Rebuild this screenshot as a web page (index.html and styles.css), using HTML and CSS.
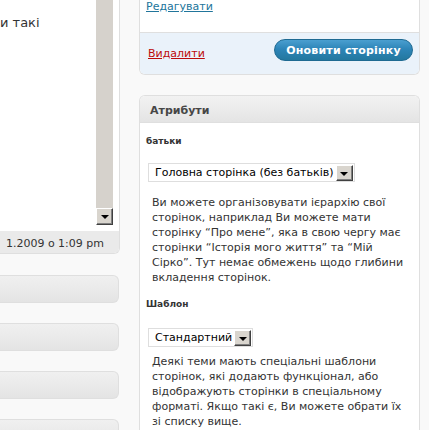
FILE: index.html
```html
<!DOCTYPE html>
<html lang="uk">
<head>
<meta charset="utf-8">
<title>Редагувати сторінку</title>
<link rel="stylesheet" href="styles.css">
</head>
<body>
<div class="page">
  <div class="main-col">
    <div class="editor">
      <div class="ta">
        <div class="ta-text">и такі</div>
        <div class="scrollbar"><span class="sb-btn"><span class="tri"></span></span></div>
      </div>
      <div class="status"><span class="status-text">1.2009 о 1:09 pm</span></div>
    </div>
    <div class="collapsed"></div>
    <div class="collapsed"></div>
    <div class="collapsed"></div>
    <div class="collapsed"></div>
  </div>
  <div class="side-col">
    <div class="submitbox">
      <div class="misc"><a class="edit-link" href="#">Редагувати</a></div>
      <div class="major">
        <a class="delete" href="#">Видалити</a>
        <span class="button">Оновити сторінку</span>
      </div>
    </div>
    <div class="postbox">
      <h3 class="pb-title">Атрибути</h3>
      <div class="inside">
        <h5 class="label label-parent">батьки</h5>
        <div class="select select-parent"><span class="sel-text">Головна сторінка (без батьків)</span><span class="sel-btn"><span class="tri"></span></span></div>
        <p class="help help-parent">Ви можете організовувати ієрархію свої<br>сторінок, наприклад Ви можете мати<br>сторінку “Про мене”, яка в свою чергу має<br>сторінки “Історія мого життя” та “Мій<br>Сірко”. Тут немає обмежень щодо глибини<br>вкладення сторінок.</p>
        <h5 class="label label-template">Шаблон</h5>
        <div class="select select-template"><span class="sel-text">Стандартний</span><span class="sel-btn"><span class="tri"></span></span></div>
        <p class="help help-template">Деякі теми мають спеціальні шаблони<br>сторінок, які додають функціонал, або<br>відображують сторінки в спеціальному<br>форматі. Якщо такі є, Ви можете обрати їх<br>зі списку вище.</p>
      </div>
    </div>
  </div>
</div>
</body>
</html>
```

FILE: styles.css
```css
html, body {
  margin: 0;
  padding: 0;
  background: #f9f9f9;
  font-family: "DejaVu Sans", Verdana, sans-serif;
  color: #333;
  overflow: hidden;
}

.page {
  display: flex;
  align-items: flex-start;
  width: 429px;
  height: 430px;
  overflow: hidden;
}

/* ---------- main column ---------- */
.main-col {
  width: 120px;
  flex: none;
  overflow: hidden;
}

.editor {
  background: #fff;
  border-right: 1px solid #dfdfdf;
  border-bottom: 1px solid #dfdfdf;
  border-bottom-right-radius: 6px;
  overflow: hidden;
}

.ta {
  display: flex;
  width: 113px;
  height: 225px;
  margin-bottom: 6px;
}

.ta-text {
  width: 96px;
  flex: none;
  font-size: 13px;
  line-height: 19px;
  padding-top: 13px;
  color: #333;
  white-space: nowrap;
}

.scrollbar {
  width: 17px;
  flex: none;
  background: #d6d2cc;
  display: flex;
  flex-direction: column;
  justify-content: flex-end;
}

.sb-btn {
  display: flex;
  align-items: center;
  justify-content: center;
  width: 17px;
  height: 17px;
  box-sizing: border-box;
  background: #d9d5ce;
  border-top: 1px solid #fff;
  border-left: 1px solid #fff;
  border-right: 1px solid #404040;
  border-bottom: 1px solid #404040;
  box-shadow: inset -1px -1px 0 #808080;
}

.tri {
  width: 0;
  height: 0;
  border-left: 4px solid transparent;
  border-right: 4px solid transparent;
  border-top: 4px solid #000;
  margin-top: 1px;
}

.status {
  display: flex;
  justify-content: flex-end;
  height: 22px;
  box-sizing: border-box;
  padding: 6px 15px 0 0;
  background: #eaeaea;
  font-size: 11px;
  line-height: 14px;
  white-space: nowrap;
}

.status-text {
  flex: none;
}

.collapsed {
  height: 28px;
  box-sizing: border-box;
  width: 119px;
  margin-top: 20px;
  border: 1px solid #dfdfdf;
  border-left: none;
  border-radius: 0 6px 6px 0;
  background: linear-gradient(#f0f0f0, #e4e4e4);
}

.editor + .collapsed {
  margin-top: 21px;
}

/* ---------- side column ---------- */
.side-col {
  width: 281px;
  flex: none;
  margin-left: 19px;
}

.submitbox {
  background: #fff;
  border: 1px solid #dfdfdf;
  border-top: none;
  border-radius: 0 0 6px 6px;
  overflow: hidden;
}

.misc {
  height: 32px;
  padding-left: 6px;
  font-size: 11px;
  line-height: 13px;
}

.edit-link {
  display: inline-block;
  margin-top: -1px;
  color: #21759b;
  text-decoration: underline;
}

.major {
  display: flex;
  justify-content: space-between;
  align-items: flex-start;
  height: 35px;
  padding: 6px 6px 0 8px;
  border-top: 1px solid #dfdfdf;
  background: #eaf2fa;
}

.delete {
  margin-top: 8px;
  font-size: 11px;
  line-height: 13px;
  color: #bc0b0b;
  text-decoration: underline;
}

.button {
  display: flex;
  align-items: center;
  justify-content: center;
  width: 139px;
  height: 22px;
  box-sizing: border-box;
  border: 1px solid #1e6a92;
  border-radius: 11px;
  background: linear-gradient(#4a9fd0 0%, #2d85b8 45%, #23789f 100%);
  color: #fff;
  font-size: 11px;
  font-weight: bold;
  letter-spacing: 0.2px;
  padding-top: 1px;
}

.postbox {
  margin-top: 20px;
  background: #fff;
  border: 1px solid #dfdfdf;
  border-bottom: none;
  border-radius: 6px 6px 0 0;
  overflow: hidden;
}

.pb-title {
  margin: 0;
  height: 23px;
  padding: 3px 0 0 10px;
  line-height: 23px;
  font-size: 11px;
  font-weight: bold;
  color: #464646;
  background: linear-gradient(#f2f2f2, #e4e4e4);
  border-bottom: 1px solid #dfdfdf;
}

.inside {
  padding-left: 6px;
  padding-bottom: 20px;
}

.label {
  margin: 0;
  font-size: 9px;
  line-height: 13px;
  font-weight: bold;
  color: #333;
}

.label-parent {
  margin-top: 12px;
}

.label-template {
  margin-top: 13px;
}

.select {
  display: inline-flex;
  align-items: center;
  height: 19px;
  box-sizing: border-box;
  margin-left: 2px;
  padding: 0 1px 0 6px;
  border: 1px solid #dedede;
  background: #fff;
  font-size: 11px;
  line-height: 13px;
  color: #000;
  white-space: nowrap;
  vertical-align: top;
}

.select-parent {
  margin-top: 15px;
}

.select-template {
  margin-top: 17px;
}

.sel-btn {
  display: flex;
  align-items: center;
  justify-content: center;
  width: 17px;
  height: 16px;
  box-sizing: border-box;
  margin-left: 2px;
  margin-top: 1px;
  background: #d9d5ce;
  border-top: 1px solid #fff;
  border-left: 1px solid #fff;
  border-right: 1px solid #404040;
  border-bottom: 1px solid #404040;
  box-shadow: inset -1px -1px 0 #808080;
}

.help {
  margin: 0;
  padding-left: 6px;
  font-size: 11px;
  line-height: 15px;
  color: #333;
  white-space: nowrap;
}

.help-parent {
  margin-top: 13px;
}

.help-template {
  margin-top: 7px;
}
```
